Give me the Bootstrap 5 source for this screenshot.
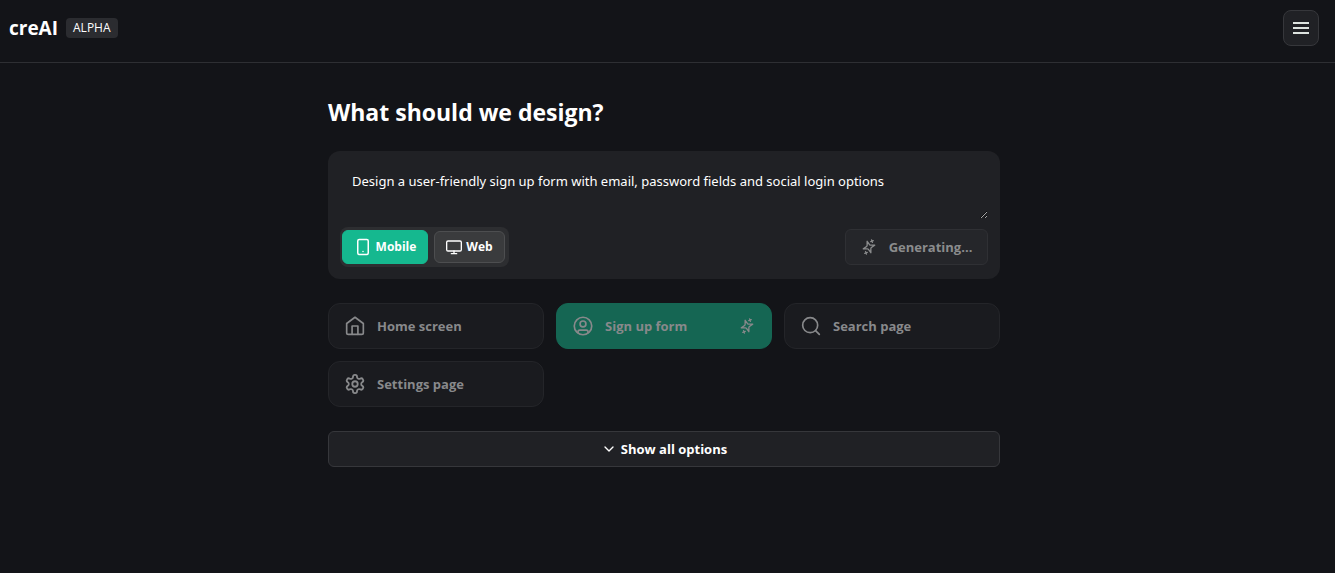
<!DOCTYPE html>
<html lang="en" data-bs-theme="dark">
<head>
<meta charset="utf-8">
<meta name="viewport" content="width=device-width, initial-scale=1">
<title>creAI</title>
<link href="https://cdn.jsdelivr.net/npm/bootstrap@5.3.0/dist/css/bootstrap.min.css" rel="stylesheet">
<style>
  body { background: #131418; color: #fff; font: 14px/20px "Open Sans", "Noto Sans", sans-serif; }
  svg { fill: none; stroke: currentColor; stroke-width: 2; stroke-linecap: round; stroke-linejoin: round; flex: none; }
  .topbar { border-bottom: 1px solid #2e2f33; padding: 10px 16px 16px 9px; }
  .brand { font-size: 19px; line-height: 36px; }
  .stage-tag { background: #2b2c30; font-size: 12px; line-height: 20px; padding: 0 7px; border-radius: 4px; }
  .btn { --bs-btn-font-size: 13px; --bs-btn-line-height: 20px; --bs-btn-font-weight: 700; --bs-btn-color: #fff; }
  .btn-panel { --bs-btn-bg: #202125; --bs-btn-border-color: #36373b; --bs-btn-border-radius: 6px; --bs-btn-hover-bg: #292a2e; --bs-btn-hover-border-color: #44454a; height: 36px; }
  .menu-btn { width: 36px; --bs-btn-border-radius: 8px; }
  .menu-btn svg { stroke: #dde3df; stroke-linecap: butt; }
  .workspace { max-width: 672px; }
  .page-pad { padding: 33px 7px 32px 0; }
  h1 { font-size: 23px; line-height: 32px; margin-bottom: 23px; }
  .prompt { background: #202125; border-radius: 12px; padding: 12px; }
  .prompt textarea { height: 56px; padding: 8px 12px; background: transparent; border: 0; color: #fff; font: 13px/20px "Noto Sans", "Open Sans", sans-serif; display: block; resize: vertical; overflow: hidden; }
  .prompt textarea:focus { background: transparent; color: #fff; box-shadow: 0 0 0 1px #15b88f; }
  .switcher { background: #2d2e31; border-radius: 8px; padding: 2px 4px 2px 2px; height: 40px; gap: 6px; }
  .switcher .btn { --bs-btn-font-size: 12px; --bs-btn-border-radius: 6px; }
  .mode-mobile { --bs-btn-bg: #15b88f; --bs-btn-border-color: #15b88f; --bs-btn-hover-bg: #129e7b; height: 34px; width: 86px; }
  .mode-web { --bs-btn-bg: #3a3b3d; --bs-btn-border-color: #4d4e50; --bs-btn-hover-bg: #454648; height: 32px; width: 71px; }
  .generate { --bs-btn-disabled-bg: #25262a; --bs-btn-disabled-border-color: #2f3034; --bs-btn-disabled-color: #8b8c8d; --bs-btn-disabled-opacity: 1; width: 143px; }
  .presets { --bs-gutter-x: 12px; --bs-gutter-y: 12px; margin-top: 12px; }
  .preset { --bs-btn-disabled-bg: #1a1b1f; --bs-btn-disabled-border-color: #242529; --bs-btn-disabled-color: #88898b; --bs-btn-disabled-opacity: 1; --bs-btn-border-radius: 12px; height: 46px; padding: 0 16px; }
  .preset.selected { --bs-btn-disabled-bg: #156653; --bs-btn-disabled-border-color: #156653; }
  .preset span { margin-left: 12px; }
  .options-gap { margin-top: 24px; }
</style>
</head>
<body>
<svg class="d-none" aria-hidden="true">
  <symbol id="spark" viewBox="0 0 24 24">
    <g transform="rotate(72 12 12)">
      <path d="m12 3-1.900 5.800a2 2 0 0 1-1.300 1.300L3 12l5.800 1.900a2 2 0 0 1 1.300 1.300L12 21l1.900-5.800a2 2 0 0 1 1.300-1.300L21 12l-5.800-1.900a2 2 0 0 1-1.300-1.300Z"/>
      <path d="M5 3v4M3 5h4M19 17v4M17 19h4"/>
    </g>
  </symbol>
</svg>

<header class="topbar d-flex align-items-center justify-content-between">
  <div class="d-flex align-items-center gap-2">
    <span class="brand fw-bold">creAI</span>
    <span class="stage-tag">ALPHA</span>
  </div>
  <button type="button" class="btn btn-panel menu-btn p-0 d-flex align-items-center justify-content-center" aria-label="Menu">
    <svg width="16" height="16" viewBox="0 0 16 16"><path d="M0 3h16M0 8h16M0 13h16"/></svg>
  </button>
</header>

<main class="page-pad">
  <div class="workspace mx-auto">
    <h1 class="fw-bold">What should we design?</h1>

    <form class="prompt">
      <textarea class="form-control" aria-label="What should we design?" spellcheck="false">Design a user-friendly sign up form with email, password fields and social login options</textarea>
      <div class="d-flex align-items-center justify-content-between mt-2">
        <div class="switcher d-flex align-items-center" role="group" aria-label="Platform">
          <button type="button" class="btn mode-mobile p-0 d-flex align-items-center justify-content-center gap-1" aria-pressed="true">
            <svg width="18" height="18" viewBox="0 0 24 24"><rect x="5" y="2" width="14" height="20" rx="2"/><path d="M12 18h.01"/></svg>Mobile
          </button>
          <button type="button" class="btn mode-web p-0 d-flex align-items-center justify-content-center gap-1" aria-pressed="false">
            <svg width="16" height="16" viewBox="0 0 24 24"><rect x="1" y="3" width="22" height="15" rx="2"/><path d="M8 22h8M12 18v4"/></svg>Web
          </button>
        </div>
        <button type="submit" class="btn btn-panel generate p-0 d-flex align-items-center justify-content-center gap-2" disabled>
          <svg class="me-1" width="16" height="16"><use href="#spark"/></svg>Generating...
        </button>
      </div>
    </form>

    <div class="row row-cols-3 presets">
      <div class="col"><button type="button" class="btn preset w-100 d-flex align-items-center" disabled>
        <svg width="20" height="20" viewBox="0 0 24 24"><path d="m2 9 10-7.500L22 9v11a2 2 0 0 1-2 2H4a2 2 0 0 1-2-2Z"/><path d="M8.500 22V12h7v10"/></svg><span>Home screen</span></button></div>
      <div class="col"><button type="button" class="btn preset selected w-100 d-flex align-items-center" disabled>
        <svg width="20" height="20" viewBox="0 0 24 24"><circle cx="12" cy="12" r="10.500"/><circle cx="12" cy="9.500" r="3.500"/><path d="M6 20v-1a2 2 0 0 1 2-2h8a2 2 0 0 1 2 2v1"/></svg><span>Sign up form</span>
        <svg class="ms-auto" width="16" height="16"><use href="#spark"/></svg></button></div>
      <div class="col"><button type="button" class="btn preset w-100 d-flex align-items-center" disabled>
        <svg width="20" height="20" viewBox="0 0 24 24"><circle cx="11" cy="11" r="9"/><path d="m22 22-4.500-4.500"/></svg><span>Search page</span></button></div>
      <div class="col"><button type="button" class="btn preset w-100 d-flex align-items-center" disabled>
        <svg width="20" height="20" viewBox="1 1 22 22"><path d="M12.220 2h-.440a2 2 0 0 0-2 2v.180a2 2 0 0 1-1 1.730l-.430.250a2 2 0 0 1-2 0l-.150-.080a2 2 0 0 0-2.730.730l-.220.380a2 2 0 0 0 .730 2.730l.150.100a2 2 0 0 1 1 1.720v.510a2 2 0 0 1-1 1.740l-.150.090a2 2 0 0 0-.730 2.730l.220.380a2 2 0 0 0 2.730.730l.150-.080a2 2 0 0 1 2 0l.430.250a2 2 0 0 1 1 1.730V20a2 2 0 0 0 2 2h.440a2 2 0 0 0 2-2v-.180a2 2 0 0 1 1-1.730l.430-.250a2 2 0 0 1 2 0l.150.080a2 2 0 0 0 2.730-.730l.220-.390a2 2 0 0 0-.730-2.730l-.150-.080a2 2 0 0 1-1-1.740v-.500a2 2 0 0 1 1-1.740l.150-.090a2 2 0 0 0 .730-2.730l-.220-.380a2 2 0 0 0-2.730-.730l-.150.080a2 2 0 0 1-2 0l-.430-.250a2 2 0 0 1-1-1.730V4a2 2 0 0 0-2-2z"/><circle cx="12" cy="12" r="3"/></svg><span>Settings page</span></button></div>
    </div>

    <button type="button" class="btn btn-panel options-gap w-100 p-0 d-flex align-items-center justify-content-center gap-1">
      <svg width="16" height="16" viewBox="0 0 24 24"><path d="m6 9 6 6 6-6"/></svg>Show all options
    </button>
  </div>
</main>
<script src="https://cdn.jsdelivr.net/npm/bootstrap@5.3.0/dist/js/bootstrap.bundle.min.js"></script>
</body>
</html>
